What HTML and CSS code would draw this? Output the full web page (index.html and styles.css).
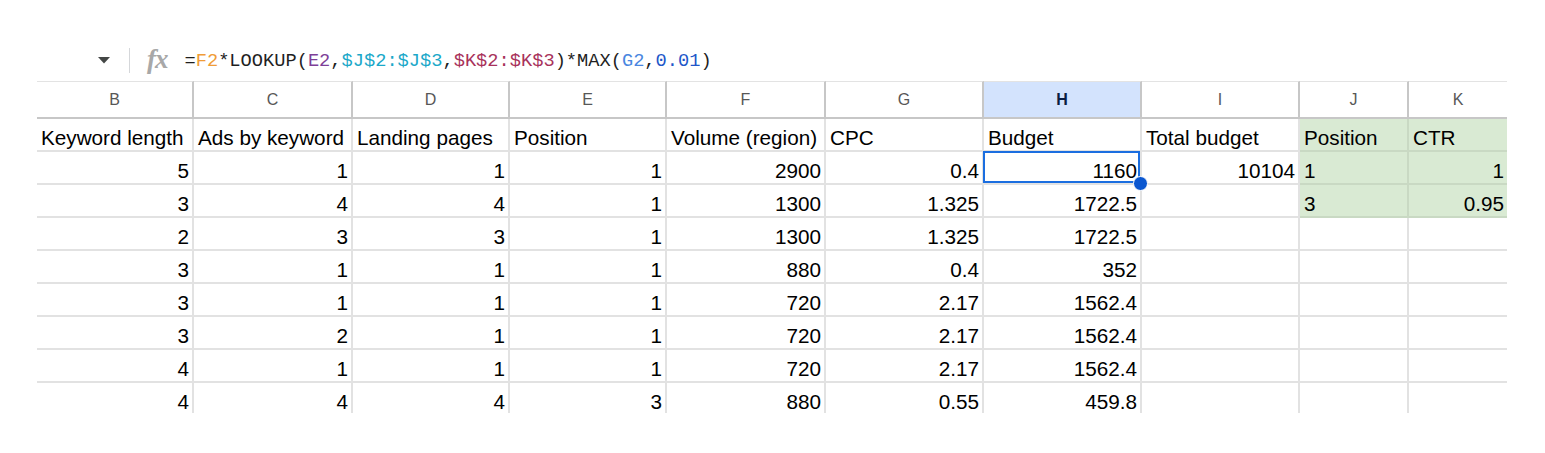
FILE: index.html
```html
<!DOCTYPE html>
<html>
<head>
<meta charset="utf-8">
<link rel="stylesheet" href="styles.css">
</head>
<body>
<div class="fbar">
  <svg class="drop" width="12" height="7" viewBox="0 0 12 7"><path d="M0 0 L12 0 L6 6.5 Z" fill="#444746"/></svg>
  <div class="sep"></div>
  <span class="fx">fx</span>
  <div class="formula">=<span class="f-or">F2</span>*LOOKUP(<span class="f-pu">E2</span>,<span class="f-te">$J$2:$J$3</span>,<span class="f-ma">$K$2:$K$3</span>)*MAX(<span class="f-bl">G2</span>,<span class="f-nu">0.01</span>)</div>
</div>
<div class="sheet">
  <div class="hd">B</div><div class="hd">C</div><div class="hd">D</div><div class="hd">E</div><div class="hd">F</div><div class="hd">G</div><div class="hd hsel">H</div><div class="hd">I</div><div class="hd">J</div><div class="hd last">K</div>

  <div class="c">Keyword length</div><div class="c">Ads by keyword</div><div class="c">Landing pages</div><div class="c">Position</div><div class="c">Volume (region)</div><div class="c">CPC</div><div class="c">Budget</div><div class="c">Total budget</div><div class="c g">Position</div><div class="c g last">CTR</div>

  <div class="c r">5</div><div class="c r">1</div><div class="c r">1</div><div class="c r">1</div><div class="c r">2900</div><div class="c r">0.4</div><div class="c r cur">1160<div class="sel"></div><div class="handle"></div></div><div class="c r">10104</div><div class="c g">1</div><div class="c g r last">1</div>

  <div class="c r">3</div><div class="c r">4</div><div class="c r">4</div><div class="c r">1</div><div class="c r">1300</div><div class="c r">1.325</div><div class="c r">1722.5</div><div class="c r"></div><div class="c g">3</div><div class="c g r last">0.95</div>

  <div class="c r">2</div><div class="c r">3</div><div class="c r">3</div><div class="c r">1</div><div class="c r">1300</div><div class="c r">1.325</div><div class="c r">1722.5</div><div class="c"></div><div class="c"></div><div class="c last"></div>

  <div class="c r">3</div><div class="c r">1</div><div class="c r">1</div><div class="c r">1</div><div class="c r">880</div><div class="c r">0.4</div><div class="c r">352</div><div class="c"></div><div class="c"></div><div class="c last"></div>

  <div class="c r">3</div><div class="c r">1</div><div class="c r">1</div><div class="c r">1</div><div class="c r">720</div><div class="c r">2.17</div><div class="c r">1562.4</div><div class="c"></div><div class="c"></div><div class="c last"></div>

  <div class="c r">3</div><div class="c r">2</div><div class="c r">1</div><div class="c r">1</div><div class="c r">720</div><div class="c r">2.17</div><div class="c r">1562.4</div><div class="c"></div><div class="c"></div><div class="c last"></div>

  <div class="c r">4</div><div class="c r">1</div><div class="c r">1</div><div class="c r">1</div><div class="c r">720</div><div class="c r">2.17</div><div class="c r">1562.4</div><div class="c"></div><div class="c"></div><div class="c last"></div>

  <div class="c r end">4</div><div class="c r end">4</div><div class="c r end">4</div><div class="c r end">3</div><div class="c r end">880</div><div class="c r end">0.55</div><div class="c r end">459.8</div><div class="c end"></div><div class="c end"></div><div class="c end last"></div>
</div>
</body>
</html>
```

FILE: styles.css
```css
html, body {
  margin: 0;
  padding: 0;
  background: #ffffff;
}

body {
  font-family: "Liberation Sans", Arial, sans-serif;
  color: #000;
  width: 1545px;
  height: 453px;
  overflow: hidden;
}

.fbar {
  padding-top: 40px;
  box-sizing: border-box;
  height: 81px;
  display: flex;
  align-items: center;
}

.drop {
  margin-left: 98px;
  margin-top: -1px;
}

.sep {
  width: 1px;
  height: 25px;
  background: #d5d7da;
  margin-left: 19px;
}

.fx {
  font-family: "Liberation Serif", "Times New Roman", serif;
  font-style: italic;
  font-weight: bold;
  font-size: 27px;
  color: #a8a8a8;
  margin-left: 17px;
  letter-spacing: -1px;
  line-height: 1;
  margin-top: -2px;
}

.formula {
  font-family: "Liberation Mono", "DejaVu Sans Mono", monospace;
  font-size: 18.7px;
  color: #1f1f1f;
  margin-left: 17px;
  white-space: pre;
  margin-top: 1px;
}

.f-or { color: #f09c38; }
.f-pu { color: #7e3f98; }
.f-te { color: #1ba8c9; }
.f-ma { color: #a8325b; }
.f-bl { color: #4a86e0; }
.f-nu { color: #2156c9; }

.sheet {
  margin-left: 37px;
  width: 1470px;
  display: grid;
  grid-template-columns: 157px 159px 157px 157px 159px 158px 158px 158px 109px 98px;
  grid-auto-rows: 33px;
  grid-template-rows: 38px;
}

.hd {
  box-sizing: border-box;
  border-top: 1px solid #e3e3e3;
  border-bottom: 2px solid #c7c7c7;
  border-right: 2px solid #c7c7c7;
  display: flex;
  align-items: center;
  justify-content: center;
  font-size: 16px;
  color: #575757;
  padding-top: 1px;
}

.hd.hsel {
  background: #d3e3fd;
  color: #0b1d42;
  font-weight: bold;
}

.c {
  box-sizing: border-box;
  border-right: 2px solid #e2e2e2;
  border-bottom: 2px solid #e2e2e2;
  font-size: 20.7px;
  line-height: 24px;
  padding: 7px 3px 0 4px;
  white-space: nowrap;
  overflow: visible;
}

.c.r {
  text-align: right;
}

.c.g {
  background: #d9ead3;
  border-color: #c9d9c3;
}

.last {
  border-right: none;
}

.c.end {
  border-bottom: none;
  height: 30px;
}

.cur {
  position: relative;
}

.sel {
  position: absolute;
  top: -1px;
  left: -1px;
  right: 0;
  bottom: 0;
  border: 2px solid #1b6ee0;
}

.handle {
  position: absolute;
  right: -8px;
  bottom: -8px;
  width: 13px;
  height: 13px;
  border-radius: 50%;
  background: #0b57d0;
  border: 1px solid #ffffff;
  z-index: 2;
}
```
